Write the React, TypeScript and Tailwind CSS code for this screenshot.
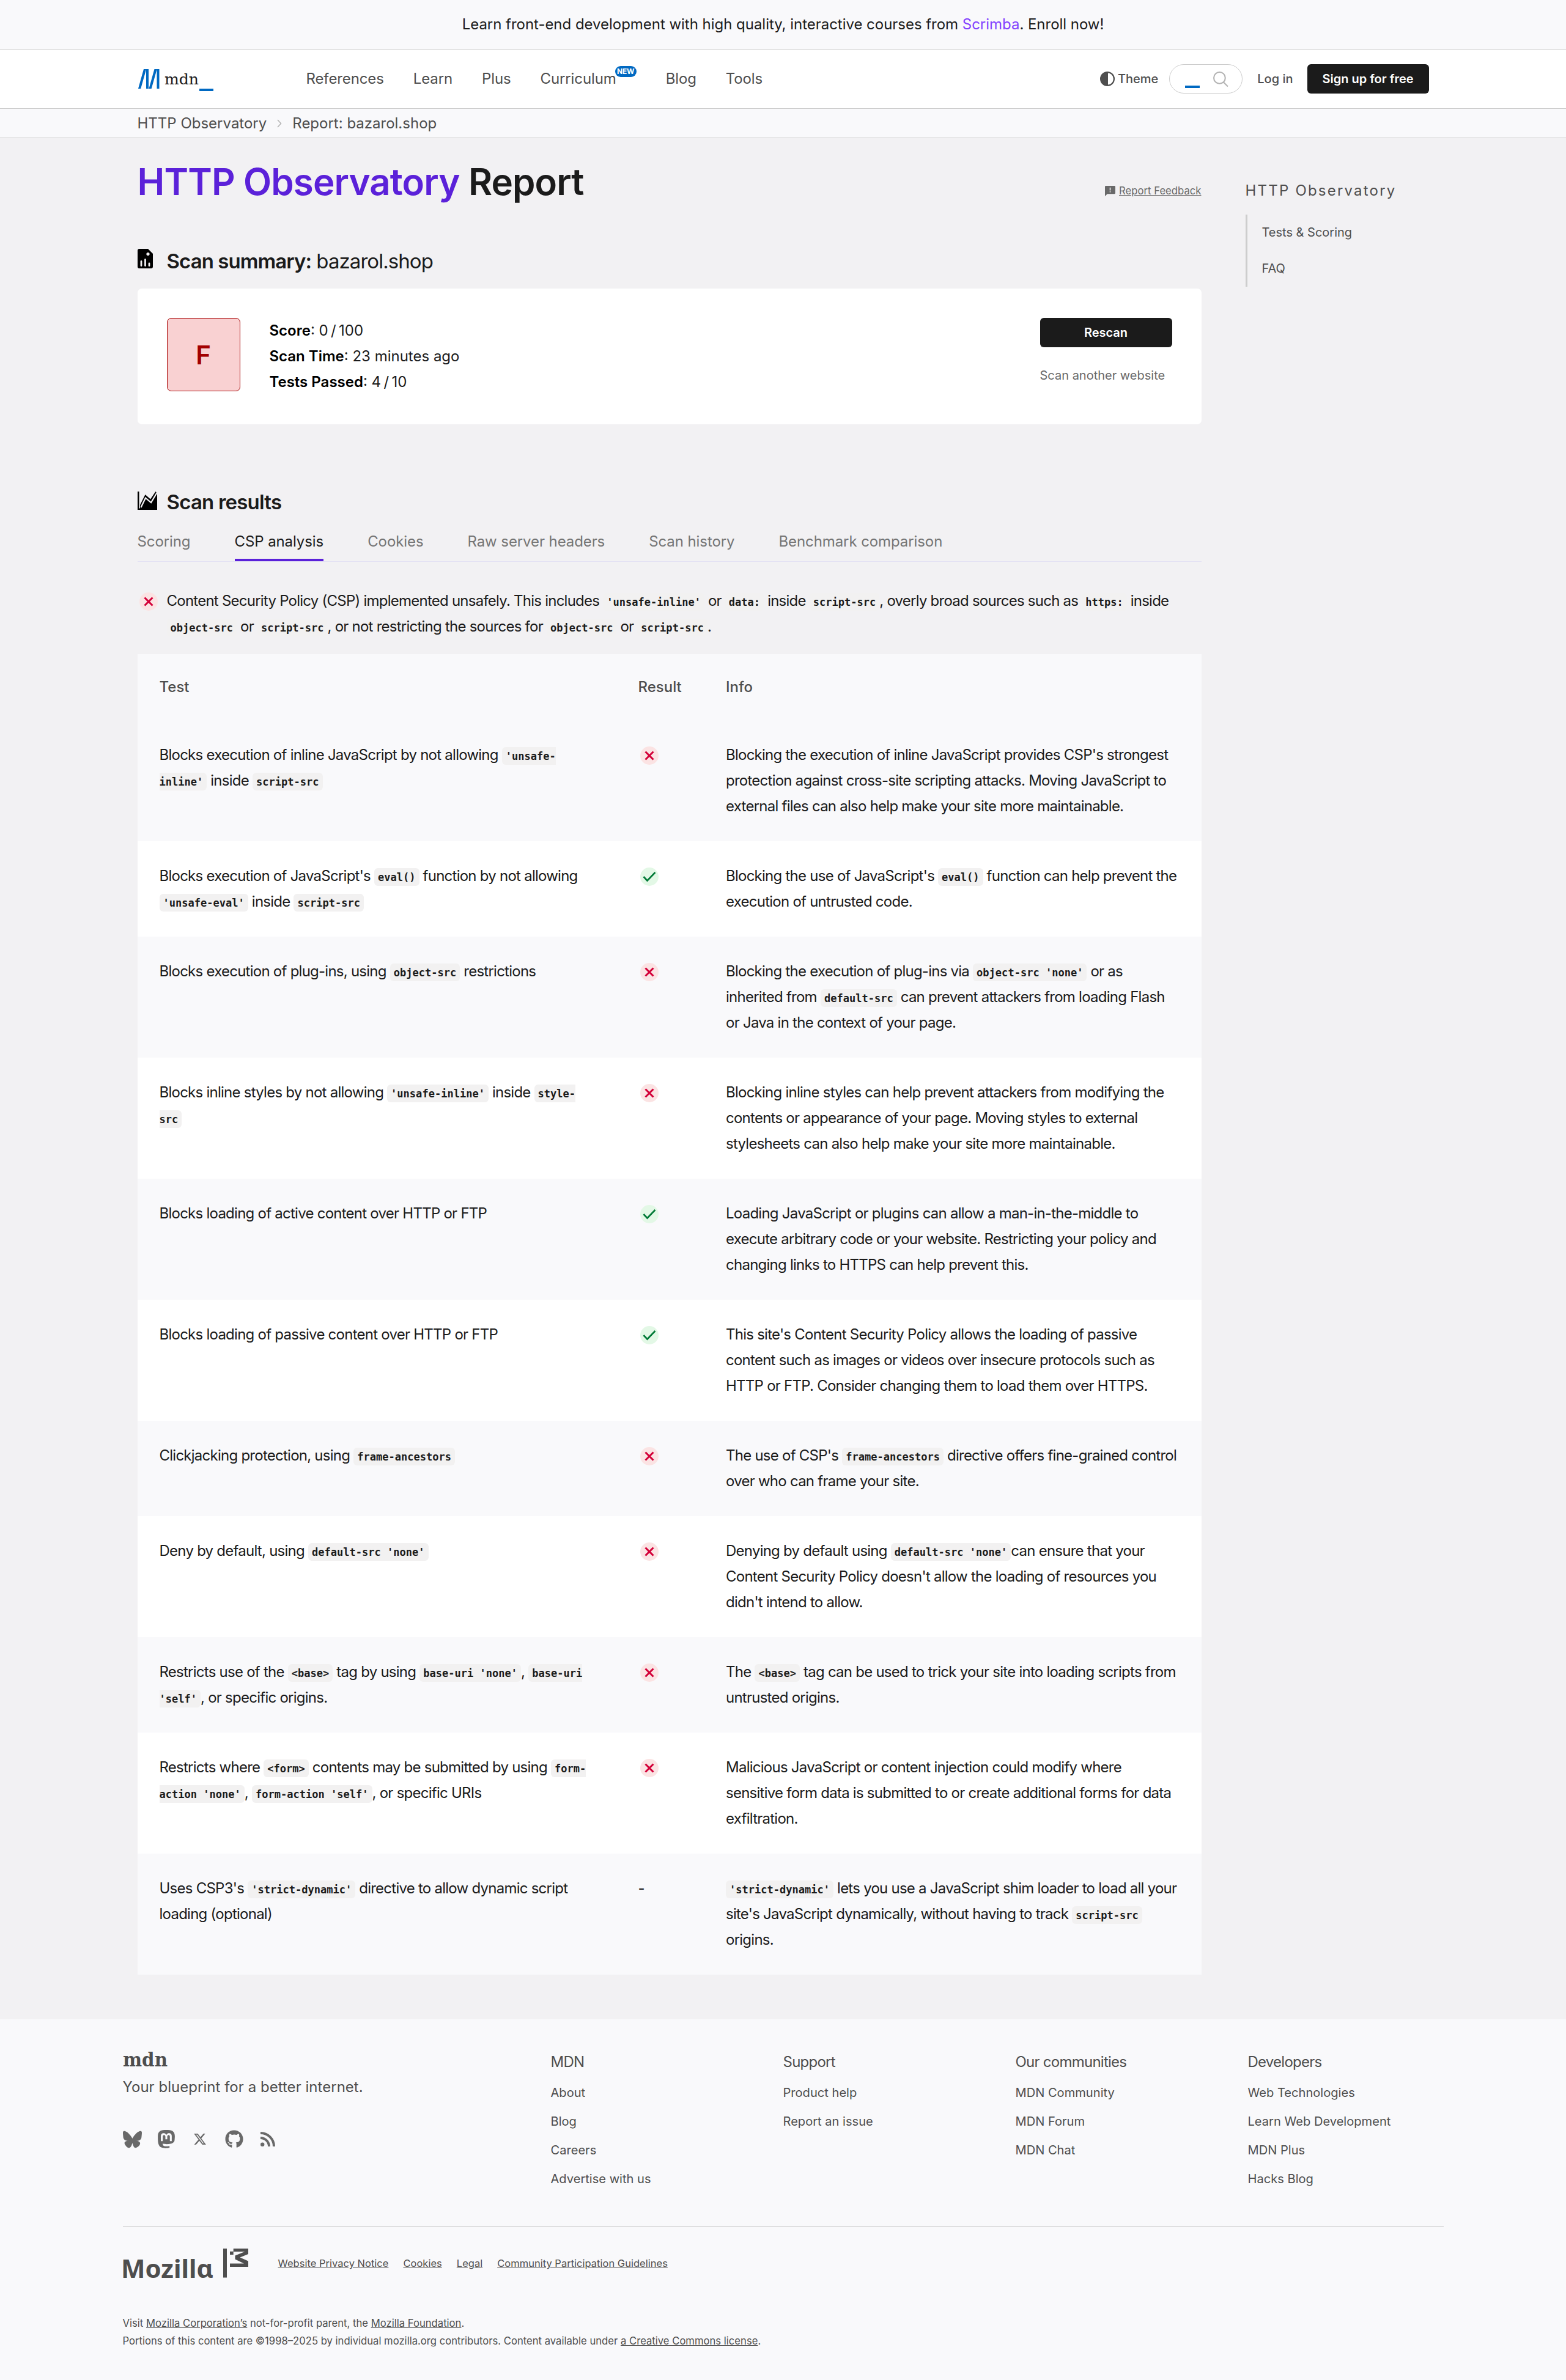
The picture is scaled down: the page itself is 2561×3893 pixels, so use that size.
import React, { ReactNode } from "react";
import { FaBluesky, FaMastodon, FaXTwitter, FaGithub } from "react-icons/fa6";

const C = ({ children }: { children: ReactNode }) => (
  <code className="rounded-[6px] bg-[#f2f1f1] px-1.5 pt-[5px] pb-[4px] font-['DejaVu_Sans_Mono',monospace] text-[17.05px] leading-none font-bold tracking-normal">
    {children}
  </code>
);

const Fail = () => (
  <svg viewBox="0 0 30 30" className="size-[30px] shrink-0">
    <circle cx="15" cy="15" r="15" fill="#fbe3e3" />
    <path d="M8.500 8.500l13 13M21.500 8.500l-13 13" stroke="#d30038" strokeWidth="3" />
  </svg>
);
const Pass = () => (
  <svg viewBox="0 0 30 30" className="size-[30px] shrink-0">
    <circle cx="15" cy="15" r="15" fill="#e3f8e6" />
    <path d="M5.500 15l6 6.500L24.500 8" stroke="#007936" strokeWidth="2.600" fill="none" />
  </svg>
);

type Row = { test: ReactNode; result: "pass" | "fail" | "-"; info: ReactNode; h: string };
const three = "h-[198px]";
const two = "h-[156px]";
const rows: Row[] = [
  {
    test: <>Blocks execution of inline JavaScript by not allowing <C>'unsafe-<br />inline'</C> inside <C>script-src</C></>,
    result: "fail",
    info: <>Blocking the execution of inline JavaScript provides CSP's strongest<br />protection against cross-site scripting attacks. Moving JavaScript to<br />external files can also help make your site more maintainable.</>,
    h: three,
  },
  {
    test: <>Blocks execution of JavaScript's <C>eval()</C> function by not allowing<br /><C>'unsafe-eval'</C> inside <C>script-src</C></>,
    result: "pass",
    info: <>Blocking the use of JavaScript's <C>eval()</C> function can help prevent the<br />execution of untrusted code.</>,
    h: two,
  },
  {
    test: <>Blocks execution of plug-ins, using <C>object-src</C> restrictions</>,
    result: "fail",
    info: <>Blocking the execution of plug-ins via <C>object-src 'none'</C> or as<br />inherited from <C>default-src</C> can prevent attackers from loading Flash<br />or Java in the context of your page.</>,
    h: three,
  },
  {
    test: <>Blocks inline styles by not allowing <C>'unsafe-inline'</C> inside <C>style-<br />src</C></>,
    result: "fail",
    info: <>Blocking inline styles can help prevent attackers from modifying the<br />contents or appearance of your page. Moving styles to external<br />stylesheets can also help make your site more maintainable.</>,
    h: three,
  },
  {
    test: <>Blocks loading of active content over HTTP or FTP</>,
    result: "pass",
    info: <>Loading JavaScript or plugins can allow a man-in-the-middle to<br />execute arbitrary code or your website. Restricting your policy and<br />changing links to HTTPS can help prevent this.</>,
    h: three,
  },
  {
    test: <>Blocks loading of passive content over HTTP or FTP</>,
    result: "pass",
    info: <>This site's Content Security Policy allows the loading of passive<br />content such as images or videos over insecure protocols such as<br />HTTP or FTP. Consider changing them to load them over HTTPS.</>,
    h: three,
  },
  {
    test: <>Clickjacking protection, using <C>frame-ancestors</C></>,
    result: "fail",
    info: <>The use of CSP's <C>frame-ancestors</C> directive offers fine-grained control<br />over who can frame your site.</>,
    h: two,
  },
  {
    test: <>Deny by default, using <C>default-src 'none'</C></>,
    result: "fail",
    info: <>Denying by default using <C>default-src 'none'</C>can ensure that your<br />Content Security Policy doesn't allow the loading of resources you<br />didn't intend to allow.</>,
    h: three,
  },
  {
    test: <>Restricts use of the <C>&lt;base&gt;</C> tag by using <C>base-uri 'none'</C>, <C>base-uri<br />'self'</C>, or specific origins.</>,
    result: "fail",
    info: <>The <C>&lt;base&gt;</C> tag can be used to trick your site into loading scripts from<br />untrusted origins.</>,
    h: two,
  },
  {
    test: <>Restricts where <C>&lt;form&gt;</C> contents may be submitted by using <C>form-<br />action 'none'</C>, <C>form-action 'self'</C>, or specific URIs</>,
    result: "fail",
    info: <>Malicious JavaScript or content injection could modify where<br />sensitive form data is submitted to or create additional forms for data<br />exfiltration.</>,
    h: three,
  },
  {
    test: <>Uses CSP3's <C>'strict-dynamic'</C> directive to allow dynamic script<br />loading (optional)</>,
    result: "-",
    info: <><C>'strict-dynamic'</C> lets you use a JavaScript shim loader to load all your<br />site's JavaScript dynamically, without having to track <C>script-src</C><br />origins.</>,
    h: three,
  },
];

const tabs = ["Scoring", "CSP analysis", "Cookies", "Raw server headers", "Scan history", "Benchmark comparison"];

const footerColumns = [
  { title: "MDN", links: ["About", "Blog", "Careers", "Advertise with us"] },
  { title: "Support", links: ["Product help", "Report an issue"] },
  { title: "Our communities", links: ["MDN Community", "MDN Forum", "MDN Chat"] },
  { title: "Developers", links: ["Web Technologies", "Learn Web Development", "MDN Plus", "Hacks Blog"] },
];

const MdnLogo = () => (
  <svg viewBox="0 0 124 36" className="ml-px h-9 w-[124px]">
    <path d="M0 32L9 0h4.200L4.200 32zM13 0h4v32h-4zM17.500 32l9-32h4.200l-9 32zM30.500 0h4v32h-4z" fill="#0069c2" />
    <text x="43" y="25" fontFamily="DejaVu Serif" fontSize="24.500" textLength="56" lengthAdjust="spacingAndGlyphs" fill="#1b1b1b">mdn</text>
    <path d="M100 32h23v4h-23z" fill="#0069c2" />
  </svg>
);

function Header() {
  return (
    <header className="h-[97px] border-b border-[#cdcdcd] bg-white">
      <div className="mx-auto flex h-24 w-[2112px] items-center text-[#4e4e4e]">
        <div className="mt-1 w-[276px]"><MdnLogo /></div>
        <nav className="flex flex-1 items-center gap-12 text-[24px] tracking-[-0.12px]">
          <span>References</span>
          <span>Learn</span>
          <span>Plus</span>
          <span className="relative mr-[33px]">
            Curriculum
            <span className="absolute -top-[3px] left-full -ml-0.5 flex h-[18px] w-[35px] items-center justify-center rounded-full bg-[#0069c2] text-[12px] font-bold text-white">NEW</span>
          </span>
          <span>Blog</span>
          <span>Tools</span>
        </nav>
        <div className="flex items-center text-[20px] font-medium">
          <svg viewBox="0 0 24 24" className="mr-[5px] size-6">
            <circle cx="12" cy="12" r="10.900" fill="none" stroke="#4e4e4e" strokeWidth="2.200" />
            <path d="M13 1a11 11 0 0 0 0 22z" fill="#4e4e4e" />
            <path d="M12 1a11 11 0 0 0 0 22z" fill="#4e4e4e" />
          </svg>
          <span>Theme</span>
          <div className="ml-[18px] flex h-12 w-[120px] items-center justify-between rounded-full border border-[#cdcdcd] pr-[22px] pl-[25px]">
            <span className="mt-[26px] h-1 w-6 bg-[#0069c2]" />
            <svg viewBox="0 0 24 24" className="size-[25px]" fill="none" stroke="#b3b3b3" strokeWidth="2">
              <circle cx="10" cy="10" r="9" />
              <path d="M16 16.500l7 7" />
            </svg>
          </div>
          <span className="ml-6">Log in</span>
          <span className="ml-[23px] flex h-12 w-[199px] items-center justify-center rounded-[6px] bg-[#1b1b1b] font-semibold text-white">Sign up for free</span>
        </div>
      </div>
    </header>
  );
}

function Summary() {
  return (
    <section className="flex h-[222px] justify-between rounded-[7px] bg-white px-12 pt-12">
      <div className="flex gap-12">
        <div className="flex size-[120px] items-center justify-center rounded-[7px] border border-[#a30000] bg-[#f9d1d2] text-[42px] font-semibold text-[#a30000]">F</div>
        <div className="text-[24px] leading-[42px]">
          <p><b className="font-semibold text-black">Score</b>: 0{"\u2009"}/{"\u2009"}100</p>
          <p><b className="font-semibold text-black">Scan Time</b>: 23 minutes ago</p>
          <p><b className="font-semibold text-black">Tests Passed</b>: 4{"\u2009"}/{"\u2009"}10</p>
        </div>
      </div>
      <div className="w-[216px]">
        <div className="flex h-12 items-center justify-center rounded-[6px] bg-[#1b1b1b] text-[20px] font-semibold text-white">Rescan</div>
        <p className="mt-[32px] text-[20px] leading-7 whitespace-nowrap text-[#696969]">Scan another website</p>
      </div>
    </section>
  );
}

function Footer() {
  return (
    <footer className="h-[590px] bg-[#f9f9fb] text-[#4e4e4e]">
      <div className="mx-auto w-[2160px] pt-12">
        <div className="flex h-[290px]">
          <div className="w-[700px] shrink-0">
            <svg viewBox="0 0 80 32" className="block h-8 w-20 overflow-visible">
              <text x="0" y="28.500" fontFamily="DejaVu Serif" fontWeight="700" fontSize="32" textLength="73" lengthAdjust="spacingAndGlyphs" fill="#4e4e4e">mdn</text>
            </svg>
            <p className="mt-[10px] text-[24px] leading-[42px] tracking-[0.03px]">Your blueprint for a better internet.</p>
            <div className="mt-[47px] flex items-center text-[#696969]">
              <FaBluesky className="mr-[23px] size-[31px]" />
              <FaMastodon className="mr-[27px] size-[34px]" />
              <FaXTwitter className="mr-[30px] size-[22px]" />
              <FaGithub className="mr-[28px] size-[30px]" />
              <svg viewBox="0 0 24 24" className="size-6" fill="none" stroke="#696969" strokeWidth="4">
                <circle cx="3.200" cy="20.800" r="3.200" fill="#696969" stroke="none" />
                <path d="M0 10a14 14 0 0 1 14 14M0 2a22 22 0 0 1 22 22" />
              </svg>
            </div>
          </div>
          {footerColumns.map((c) => (
            <div key={c.title} className="w-[380px] shrink-0 last:w-[319px]">
              <h3 className="pt-1 text-[24px] leading-[36px] tracking-[-0.75px]">{c.title}</h3>
              <div className="mt-[3px] pt-px">
                {c.links.map((l) => (
                  <p key={l} className="mb-[11px] pt-[0.1px] text-[20.1px] leading-[36px] first:mt-[10px]">{l}</p>
                ))}
              </div>
            </div>
          ))}
        </div>
        <div className="flex h-[120px] border-t border-[#cdcdcd] text-[16.55px]">
          <svg viewBox="-4 0 212 49" className="mt-9 -ml-1 h-[49px] w-[212px] overflow-visible" fill="#4e4e4e">
            <text x="-3" y="47.500" fontFamily="Noto Sans" fontWeight="700" fontSize="42" textLength="151" lengthAdjust="spacingAndGlyphs">Mozillα</text>
            <path d="M164 0h6v47.500h-6zM175 4.700h5.700v5.300H175zM180.700 0H205v9l-13.500 5.500L205 20.500V30h-30v-5.500h23l-14.500-7v-6l16-6.500h-18.800z" />
          </svg>
          <div className="mt-[48px] ml-[46px] flex gap-6 underline">
            <span>Website Privacy Notice</span>
            <span>Cookies</span>
            <span>Legal</span>
            <span>Community Participation Guidelines</span>
          </div>
        </div>
        <div className="mt-[25px] text-[16.65px] leading-[29px]">
          <p>Visit <u>Mozilla Corporation’s</u> not-for-profit parent, the <u>Mozilla Foundation</u>.</p>
          <p>Portions of this content are ©1998–2025 by individual mozilla.org contributors. Content available under <u>a Creative Commons license</u>.</p>
        </div>
      </div>
    </footer>
  );
}

export default function App() {
  return (
    <div className="min-h-[3893px] w-[2561px] bg-[#f2f1f3] font-[Inter,sans-serif] text-[#1b1b1b] [font-optical-sizing:none]">
      <div className="flex h-[81px] items-center justify-center border-b border-[#cdcdcd] bg-[#f9f9fb] text-[24px] tracking-[-0.03px]">
        <p>Learn front-end development with high quality, interactive courses from <span className="text-[#8341ff]">Scrimba</span>. Enroll now!</p>
      </div>
      <Header />
      <div className="h-12 border-b border-[#cdcdcd] bg-[#f9f9fb]">
        <div className="mx-auto flex h-[47px] w-[2112px] items-center text-[24px] text-[#4e4e4e]">
          <span>HTTP Observatory</span>
          <svg viewBox="0 0 8 14" className="mx-[17px] h-3.5 w-2" fill="none" stroke="#b3b3b3" strokeWidth="1.500"><path d="M1 1l5.500 6L1 13" /></svg>
          <span>Report: bazarol.shop</span>
        </div>
      </div>
      <div className="mx-auto flex h-[3077px] w-[2112px] justify-between">
        <main className="w-[1740px]">
          <div className="flex h-[172px] items-start justify-between">
            <h1 className="mt-[35px] text-[60px] leading-[72px] font-semibold tracking-[-0.86px]"><span className="text-[#5b21d9]">HTTP Observatory</span> Report</h1>
            <div className="mt-[72px] flex items-center gap-1.5 text-[16.7px] leading-[28px] text-[#696969]">
              <svg viewBox="0 0 18 18" className="size-[17px]"><path d="M1.500 0h15a1.500 1.500 0 0 1 1.500 1.500v11a1.500 1.500 0 0 1-1.500 1.500H4l-4 4V1.500A1.500 1.500 0 0 1 1.500 0z" fill="#696969" /><path d="M8.200 3h1.600v5H8.200zM8.200 9.500h1.600V11H8.200z" fill="#fff" /></svg>
              <u>Report Feedback</u>
            </div>
          </div>
          <h2 className="flex h-[74px] items-start gap-[23px] text-[33px] leading-[46px] tracking-[-0.94px]">
            <svg viewBox="0 0 25 32" className="mt-[9px] h-8 w-[25px]"><path d="M3 0h14l8 8v21a3 3 0 0 1-3 3H3a3 3 0 0 1-3-3V3a3 3 0 0 1 3-3z" /><path d="M6 20.500v7M12.500 17.500v10M19 24v3.500" stroke="#f2f1f3" strokeWidth="2.800" strokeLinecap="round" /><circle cx="17" cy="8.500" r="2.600" fill="#f2f1f3" /></svg>
            <span className="mt-[6px]"><b className="font-semibold">Scan summary:</b> bazarol.shop</span>
          </h2>
          <Summary />
          <h2 className="mt-[104px] flex items-center gap-4 text-[33px] leading-[46px] font-semibold tracking-[-0.8px]">
            <svg viewBox="0 0 32 30" className="-mt-1 h-[30px] w-8">
              <path d="M0 0h2.500v27.500H32V30H0z" />
              <path d="M4 28v-6l8.500-17 8.500 7.500L29.500 0 32 3v25z" />
              <path d="M5.500 26l7.500-15.500 9 7.500L32 1.500" fill="none" stroke="#f2f1f3" strokeWidth="2.200" />
            </svg>
            <span>Scan results</span>
          </h2>
          <div className="mt-[17px] flex h-[58px] gap-[72px] border-b border-[#e3e1f3] text-[24px] leading-[50px] tracking-[-0.09px] text-[#757575]">
            {tabs.map((t) => (
              <span key={t} className={t === "CSP analysis" ? "h-[57px] border-b-4 border-[#5b21d9] text-[#1b1b1b]" : ""}>{t}</span>
            ))}
          </div>
          <div className="mt-[43px] flex gap-[15px] pl-[3px] text-[24px] leading-[42px] tracking-[-0.76px]">
            <div className="mt-[7px]"><Fail /></div>
            <p className="whitespace-nowrap">
              Content Security Policy (CSP) implemented unsafely. This includes <C>'unsafe-inline'</C> or <C>data:</C> inside <C>script-src</C>, overly broad sources such as <C>https:</C> inside<br />
              <C>object-src</C> or <C>script-src</C>, or not restricting the sources for <C>object-src</C> or <C>script-src</C>.
            </p>
          </div>
          <div className="mt-[24px] text-[24px] leading-[42px]">
            <div className="grid h-[108px] grid-cols-[783px_143.5px_1fr] items-center bg-[#f9f9fb] font-medium text-[#4e4e4e]">
              <span className="pl-9">Test</span><span className="pl-9">Result</span><span className="pl-9">Info</span>
            </div>
            {rows.map((r, i) => (
              <div key={i} className={`grid grid-cols-[783px_143.5px_1fr] pt-9 tracking-[-0.75px] whitespace-nowrap ${r.h} ${i % 2 ? "bg-white" : "bg-[#f9f9fb]"}`}>
                <div className="pl-9">{r.test}</div>
                <div className="pl-9">{r.result === "-" ? "-" : <div className="mt-[7px] ml-[3px]">{r.result === "pass" ? <Pass /> : <Fail />}</div>}</div>
                <div className="pl-9">{r.info}</div>
              </div>
            ))}
          </div>
        </main>
        <aside className="w-[300px] pt-[68px] text-[#4e4e4e]">
          <h2 className="text-[24px] leading-[36px] tracking-[2.2px]">HTTP Observatory</h2>
          <div className="mt-[21px] flex h-[118px] flex-col border-l-3 border-[#cdcdcd] pl-6 text-[20px] leading-[59px]">
            <span>Tests &amp; Scoring</span>
            <span>FAQ</span>
          </div>
        </aside>
      </div>
      <Footer />
    </div>
  );
}
